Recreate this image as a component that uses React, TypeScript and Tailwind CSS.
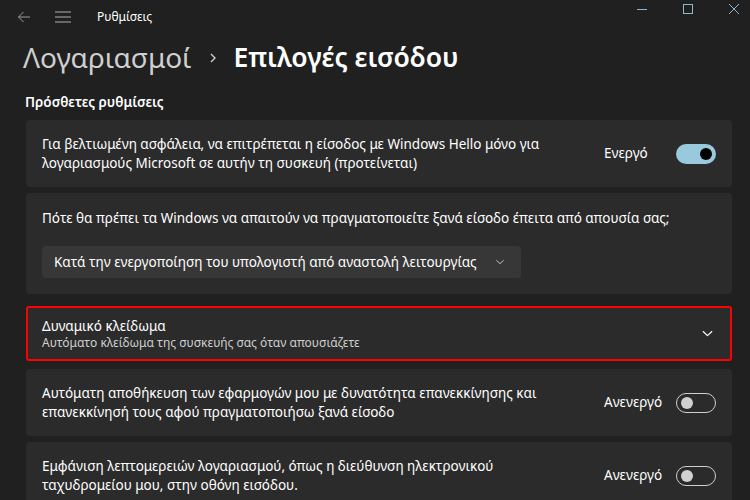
import React from "react";

// -----------------------------------------------------------------
const Toggle = ({ on }: { on: boolean }) =>
  on ? (
    <div className="flex h-[20px] w-[40px] items-center justify-end rounded-full bg-[#99c9dc] pr-[4px]">
      <div className="h-[12px] w-[12px] rounded-full bg-black" />
    </div>
  ) : (
    <div className="flex h-[20px] w-[40px] items-center rounded-full border border-[#cfcfcf] pl-[4px]">
      <div className="h-[12px] w-[12px] rounded-full bg-[#d0d0d0]" />
    </div>
  );

const Chevron = ({ size = 12 }: { size?: number }) => (
  <svg width={size} height={size} viewBox="0 0 12 12" fill="none">
    <path d="M2 4.2 L6 8 L10 4.2" stroke="currentColor" strokeWidth="1.1" strokeLinecap="round" strokeLinejoin="round" />
  </svg>
);

const ToggleRow = ({ text, on }: { text: React.ReactNode; on: boolean }) => (
  <div className="flex h-[67px] items-center justify-between rounded-[4px] bg-[#2b2b2b] pl-[16px] pr-[16px]">
    <div className="text-[13.5px] leading-[19px] text-white">{text}</div>
    <div className="flex items-center">
      <span className="w-[72px] text-[13.5px] text-white">{on ? "Ενεργό" : "Ανενεργό"}</span>
      <Toggle on={on} />
    </div>
  </div>
);

const App = () => {
  return (
    <div
      className="h-[500px] w-[750px] overflow-hidden bg-[#202020] text-white"
      style={{ fontFamily: '"Noto Sans", "Open Sans", sans-serif' }}
    >
      {/* Title bar */}
      <div className="relative flex h-[34px] items-center">
        <div className="flex w-[46px] justify-center pl-[2px] text-[#9a9a9a]">
          <svg width="14" height="14" viewBox="0 0 14 14" fill="none">
            <path d="M13 7 H1.5 M6.5 2 L1.5 7 L6.5 12" stroke="currentColor" strokeWidth="1" />
          </svg>
        </div>
        <div className="flex w-[34px] justify-center text-[#b0b0b0]">
          <svg width="16" height="12" viewBox="0 0 16 12" fill="none">
            <path d="M0 1 H16 M0 6 H16 M0 11 H16" stroke="currentColor" strokeWidth="1" />
          </svg>
        </div>
        <span className="ml-[17px] text-[12px] text-white">Ρυθμίσεις</span>
        {/* window controls */}
        <div className="ml-auto flex h-[18px] items-center gap-[36px] self-start pr-[11px] text-[#8fb6d0]">
          <div className="flex w-[10px] justify-center">
            <div className="h-px w-[10px] bg-current" />
          </div>
          <div className="h-[10px] w-[10px] border border-current" />
          <svg width="10" height="10" viewBox="0 0 10 10">
            <path d="M0 0 L10 10 M10 0 L0 10" stroke="currentColor" strokeWidth="1" />
          </svg>
        </div>
      </div>

      {/* Header */}
      <div className="flex items-center pl-[23px] pt-[4px]">
        <h1 className="text-[28px] leading-[38px] text-[#cfcfcf]">Λογαριασμοί</h1>
        <svg className="ml-[17px] mr-[15px] mt-[2px] text-[#cfcfcf]" width="10" height="12" viewBox="0 0 10 12" fill="none">
          <path d="M3 2 L7 6 L3 10" stroke="currentColor" strokeWidth="1.4" />
        </svg>
        <h1 className="text-[26.5px] font-semibold leading-[38px] text-white">Επιλογές εισόδου</h1>
      </div>

      <div className="mt-[16px] pl-[25px] text-[13.5px] font-semibold leading-[20px]">Πρόσθετες ρυθμίσεις</div>

      {/* Cards */}
      <div className="mt-[8px] flex w-[732px] flex-col gap-[6px] pl-[26px]">
        <ToggleRow
          on
          text={
            <>
              Για βελτιωμένη ασφάλεια, να επιτρέπεται η είσοδος με Windows Hello μόνο για
              <br />
              λογαριασμούς Microsoft σε αυτήν τη συσκευή (προτείνεται)
            </>
          }
        />

        <div className="flex h-[101px] flex-col rounded-[4px] bg-[#2b2b2b] pl-[16px] pt-[15px]">
          <div className="text-[13.5px] leading-[20px]">
            Πότε θα πρέπει τα Windows να απαιτούν να πραγματοποιείτε ξανά είσοδο έπειτα από απουσία σας;
          </div>
          <div className="mt-[18px] flex h-[32px] w-[479px] items-center justify-between rounded-[4px] bg-[#373737] pl-[12px] pr-[16px]">
            <span className="text-[13.5px]">Κατά την ενεργοποίηση του υπολογιστή από αναστολή λειτουργίας</span>
            <span className="text-[#cfcfcf]">
              <Chevron size={10} />
            </span>
          </div>
        </div>

        <div className="mt-[6px] flex h-[55px] items-center justify-between rounded-[3px] border-2 border-[#ff0000] bg-[#2b2b2b] pl-[14px] pr-[16px]">
          <div className="flex flex-col">
            <span className="text-[13.5px] leading-[18px]">Δυναμικό κλείδωμα</span>
            <span className="text-[12px] leading-[16px] text-[#cfcfcf]">Αυτόματο κλείδωμα της συσκευής σας όταν απουσιάζετε</span>
          </div>
          <span className="text-white">
            <Chevron size={13} />
          </span>
        </div>

        <div className="mt-[2px] flex flex-col gap-[6px]">
          <ToggleRow
            on={false}
            text={
              <>
                Αυτόματη αποθήκευση των εφαρμογών μου με δυνατότητα επανεκκίνησης και
                <br />
                επανεκκίνησή τους αφού πραγματοποιήσω ξανά είσοδο
              </>
            }
          />
          <ToggleRow
            on={false}
            text={
              <>
                Εμφάνιση λεπτομερειών λογαριασμού, όπως η διεύθυνση ηλεκτρονικού
                <br />
                ταχυδρομείου μου, στην οθόνη εισόδου.
              </>
            }
          />
        </div>
      </div>
    </div>
  );
};

export default App;
